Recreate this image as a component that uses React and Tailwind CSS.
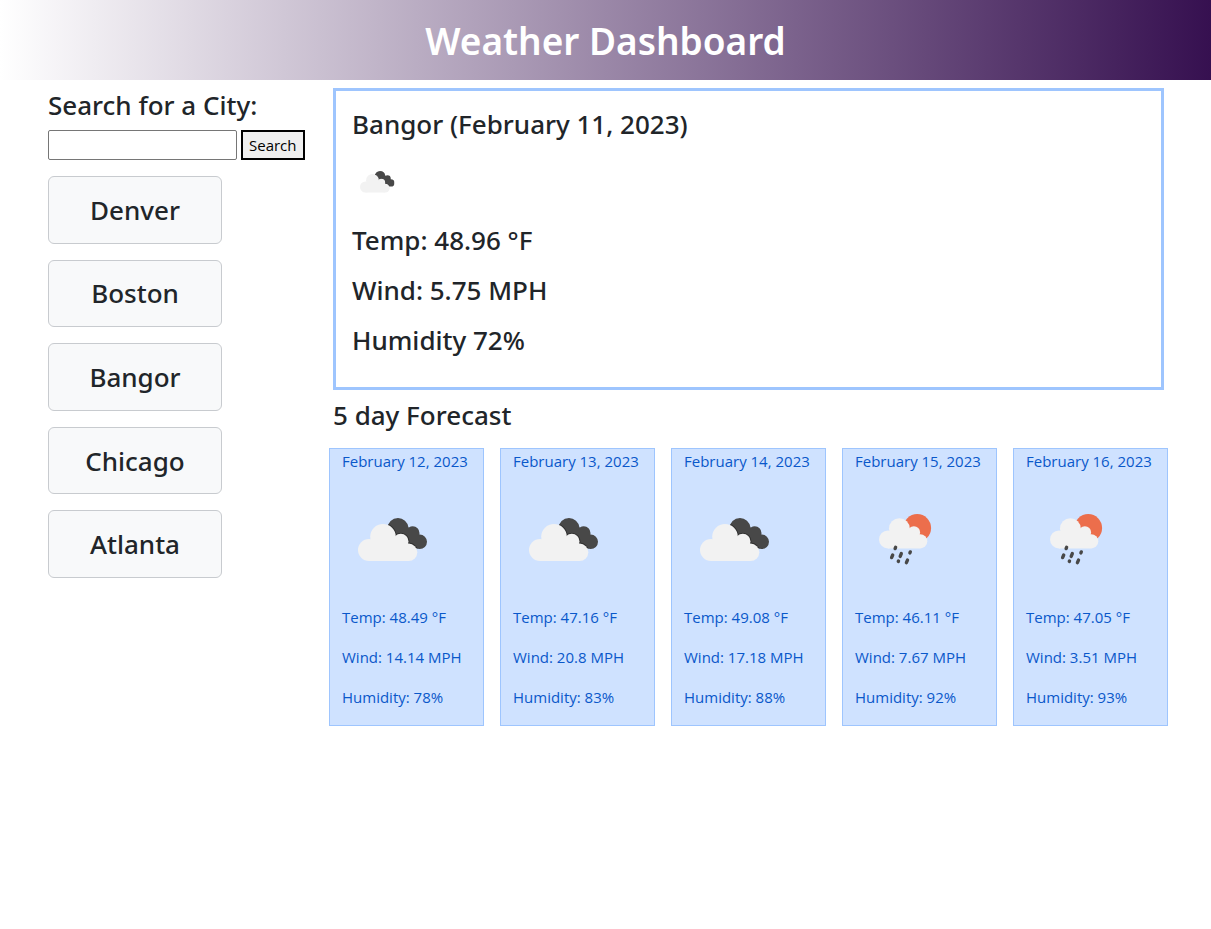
import React from "react";

const cities = ["Denver", "Boston", "Bangor", "Chicago", "Atlanta"];

const forecast = [
  { date: "February 12, 2023", icon: "clouds", temp: "48.49", wind: "14.14", humidity: "78" },
  { date: "February 13, 2023", icon: "clouds", temp: "47.16", wind: "20.8", humidity: "83" },
  { date: "February 14, 2023", icon: "clouds", temp: "49.08", wind: "17.18", humidity: "88" },
  { date: "February 15, 2023", icon: "rain", temp: "46.11", wind: "7.67", humidity: "92" },
  { date: "February 16, 2023", icon: "rain", temp: "47.05", wind: "3.51", humidity: "93" },
];

function Cloud() {
  return (
    <>
      <circle cx="27" cy="60" r="11" />
      <circle cx="41" cy="46.8" r="12.8" />
      <circle cx="58.8" cy="51.4" r="7.7" />
      <circle cx="66.6" cy="62.3" r="8.7" />
      <path d="M27 71V56L32 48H58L66 55V71Z" />
    </>
  );
}

function CloudsIcon({ className, id }) {
  return (
    <svg viewBox="0 0 100 100" className={className} role="img" aria-label="Broken clouds">
      <defs>
        <clipPath id={id}>
          <circle cx="56" cy="38.5" r="10.5" />
          <circle cx="70.8" cy="43" r="6.7" />
          <circle cx="77.7" cy="51.8" r="7.3" />
          <path d="M56 49L46 40L62 34L77 45L77.7 59.1L70 57Z" />
        </clipPath>
      </defs>
      <g clipPath={`url(#${id})`}>
        <rect width="100" height="100" fill="#484848" />
        <g fill="#303030" stroke="#303030" strokeWidth="2">
          <Cloud />
        </g>
      </g>
      <g fill="#f2f2f2">
        <Cloud />
      </g>
    </svg>
  );
}

function RainIcon({ className }) {
  return (
    <svg viewBox="0 0 100 100" className={className} role="img" aria-label="Light rain">
      <circle cx="62.2" cy="38" r="13.9" fill="#ec6e4c" />
      <g transform="translate(11 .6) scale(.814)" fill="#f2f2f2">
        <Cloud />
      </g>
      <path
        d="M40.6 57.3L40.1 58.6M37.7 65L36.6 67.6M46.3 63.6L45.2 66.4M43.5 71L43.3 71.5M55.3 61.9L54.9 62.9M52.5 70.1L51.4 72.7"
        stroke="#484848"
        strokeWidth="3.4"
        strokeLinecap="round"
      />
    </svg>
  );
}

export default function App() {
  return (
    <div className="font-['Noto_Sans','Open_Sans',sans-serif] text-[#212529]">
      <header className="flex h-20 items-center justify-center bg-linear-to-r/srgb from-white to-[#361050] pt-0.5">
        <h1 className="text-[37px] leading-12 font-semibold text-white">Weather Dashboard</h1>
      </header>
      <div className="flex px-12 pt-2">
        <aside className="w-[285px] shrink-0">
          <form onSubmit={(e) => e.preventDefault()}>
            <label htmlFor="city" className="mb-2 block text-[26px] leading-[34px] font-medium">
              Search for a City:
            </label>
            <div className="flex gap-1">
              <input
                id="city"
                type="text"
                className="h-[30px] w-[189px] rounded-xs border border-[#767676] bg-white px-1"
              />
              <button
                type="submit"
                className="h-[30px] border-2 border-black bg-[#efefef] px-1.5 font-['Open_Sans'] text-[15px] leading-6 text-black"
              >
                Search
              </button>
            </div>
          </form>
          <div className="mt-4 flex h-[402px] w-[174px] flex-col gap-4">
            {cities.map((city) => (
              <button
                key={city}
                type="button"
                className="flex-1 rounded-md border border-[#c8cbcf] bg-[#f8f9fa] text-[26px] leading-[34px] font-medium"
              >
                {city}
              </button>
            ))}
          </div>
        </aside>
        <main className="min-w-0 flex-1">
          <section className="mr-[-1px] border-3 border-[#9ec5fe] px-4 pt-4 pb-3.5 text-[26px] leading-[34px] font-medium">
            <h2 className="mb-4">Bangor (February 11, 2023)</h2>
            <CloudsIcon id="today" className="mb-4 size-[50px]" />
            <p className="mb-4">Temp: 48.96 °F</p>
            <p className="mb-4">Wind: 5.75 MPH</p>
            <p className="mb-4">Humidity 72%</p>
          </section>
          <h2 className="mt-2 text-[26px] leading-[34px] font-medium">5 day Forecast</h2>
          <div className="-mr-[5px] -ml-1 mt-4 grid grid-cols-5 gap-4">
            {forecast.map((day, i) => (
              <article
                key={day.date}
                className="border border-[#9ec5fe] bg-[#cfe2ff] pl-3 font-['Open_Sans'] text-[15px] leading-6 whitespace-nowrap text-[#0a58ca]"
              >
                <h3>{day.date}</h3>
                {day.icon === "clouds" ? (
                  <CloudsIcon id={`day-${i}`} className="mt-[17px] mb-[15px] size-[100px]" />
                ) : (
                  <RainIcon className="mt-[17px] mb-[15px] size-[100px]" />
                )}
                <p className="mb-4">Temp: {day.temp} °F</p>
                <p className="mb-4">Wind: {day.wind} MPH</p>
                <p className="mb-4">Humidity: {day.humidity}%</p>
              </article>
            ))}
          </div>
        </main>
      </div>
    </div>
  );
}
